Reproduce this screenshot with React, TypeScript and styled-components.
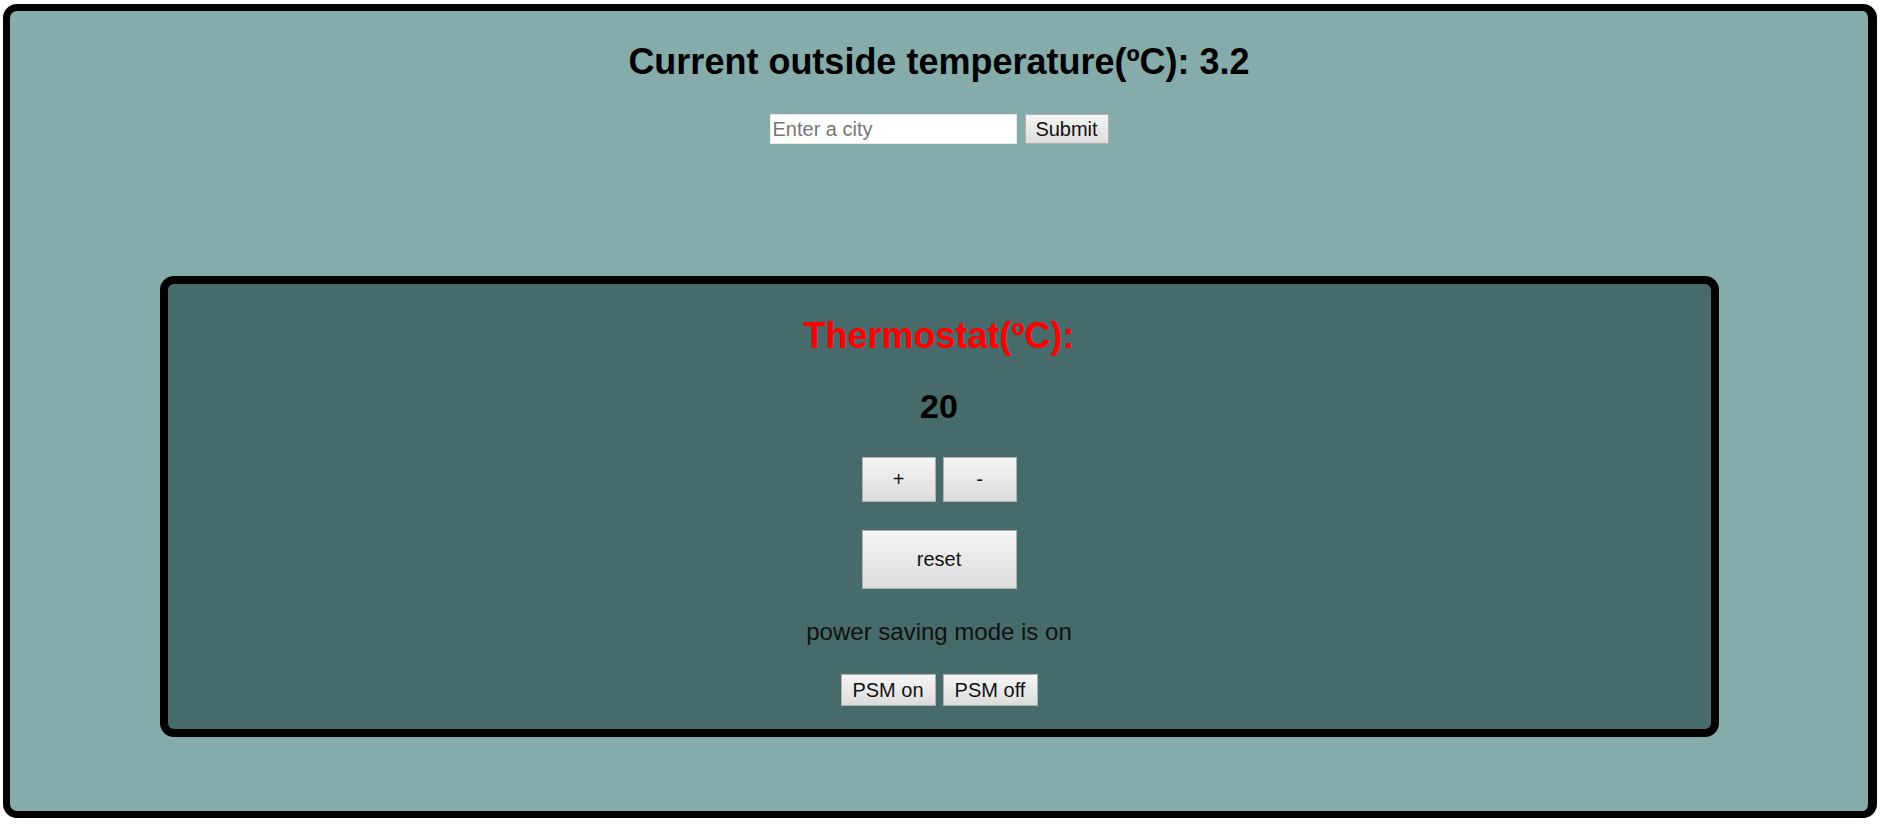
import React, { useState } from "react";
import styled, { createGlobalStyle } from "styled-components";

const GlobalStyle = createGlobalStyle`
  html, body {
    margin: 0;
    padding: 0;
    background: #ffffff;
    font-family: "Liberation Sans", Arial, sans-serif;
  }
`;

const Page = styled.div`
  padding: 4px 5px 6px 3px;
`;

const Weather = styled.div`
  box-sizing: border-box;
  height: 814px;
  border: 7px solid #000;
  border-right-width: 9px;
  border-radius: 14px;
  background: #85abab;
  display: flex;
  flex-direction: column;
  align-items: center;
`;

const Heading = styled.h1`
  margin: 31px 0 0;
  font-size: 36px;
  line-height: 40px;
  font-weight: bold;
  color: #000;
`;

const CityForm = styled.form`
  margin-top: 32px;
  display: flex;
  gap: 8px;
  height: 30px;
`;

const CityInput = styled.input`
  box-sizing: border-box;
  width: 247px;
  height: 30px;
  padding: 0 2px;
  border: 1px solid #e4e9e9;
  background: #fff;
  font-family: "Liberation Sans", Arial, sans-serif;
  font-size: 20px;
  color: #000;
  outline: none;

  &::placeholder {
    color: #767676;
  }
`;

const Button = styled.button<{ $w: number; $h: number }>`
  box-sizing: border-box;
  width: ${(p) => p.$w}px;
  height: ${(p) => p.$h}px;
  padding: 0;
  border: 1px solid #acb1b1;
  border-radius: 0;
  background: linear-gradient(#f5f5f5, #dcdcdc);
  font-family: "Liberation Sans", Arial, sans-serif;
  font-size: 20px;
  color: #111;
  cursor: pointer;
`;

const Thermostat = styled.div`
  box-sizing: border-box;
  width: 1559px;
  height: 461px;
  margin-top: 132px;
  padding-top: 32px;
  border: 8px solid #000;
  border-radius: 14px;
  background: #476b6a;
  display: flex;
  flex-direction: column;
  align-items: center;
`;

const ThermoTitle = styled.h2`
  margin: 0;
  font-size: 36px;
  line-height: 40px;
  font-weight: bold;
  color: #ff0000;
`;

const Reading = styled.div`
  margin-top: 32px;
  font-size: 34px;
  line-height: 37px;
  font-weight: bold;
  color: #000;
`;

const ButtonRow = styled.div<{ $top: number }>`
  margin-top: ${(p) => p.$top}px;
  display: flex;
  gap: 7px;
`;

const Status = styled.p`
  margin: 29px 0 0;
  font-size: 24px;
  line-height: 28px;
  color: #111;
`;

export default function App() {
  const [temp, setTemp] = useState(20);
  const [psm, setPsm] = useState(true);

  return (
    <>
      <GlobalStyle />
      <Page>
        <Weather>
          <Heading>Current outside temperature(ºC): 3.2</Heading>
          <CityForm onSubmit={(e) => e.preventDefault()}>
            <CityInput type="text" placeholder="Enter a city" />
            <Button type="submit" $w={84} $h={30}>
              Submit
            </Button>
          </CityForm>

          <Thermostat>
            <ThermoTitle>Thermostat(ºC):</ThermoTitle>
            <Reading>{temp}</Reading>
            <ButtonRow $top={32}>
              <Button $w={74} $h={45} onClick={() => setTemp(temp + 1)}>
                +
              </Button>
              <Button $w={74} $h={45} onClick={() => setTemp(temp - 1)}>
                -
              </Button>
            </ButtonRow>
            <ButtonRow $top={28}>
              <Button $w={155} $h={59} onClick={() => setTemp(20)}>
                reset
              </Button>
            </ButtonRow>
            <Status>power saving mode is {psm ? "on" : "off"}</Status>
            <ButtonRow $top={28}>
              <Button $w={95} $h={32} onClick={() => setPsm(true)}>
                PSM on
              </Button>
              <Button $w={95} $h={32} onClick={() => setPsm(false)}>
                PSM off
              </Button>
            </ButtonRow>
          </Thermostat>
        </Weather>
      </Page>
    </>
  );
}
